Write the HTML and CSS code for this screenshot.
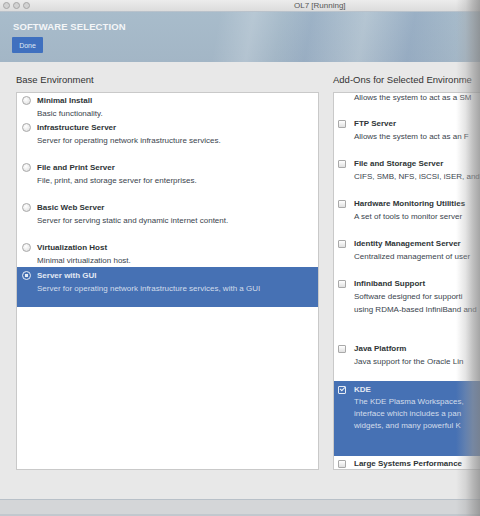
FILE: index.html
```html
<!DOCTYPE html>
<html>
<head>
<meta charset="utf-8">
<link rel="stylesheet" href="styles.css">
</head>
<body>
<div class="window">
  <div class="titlebar">
    <div class="lights"><span class="light"></span><span class="light"></span><span class="light"></span></div>
    <span class="wtitle">OL7 [Running]</span>
  </div>
  <div class="header">
    <h1>SOFTWARE SELECTION</h1>
    <button class="done">Done</button>
  </div>
  <div class="content">
    <section class="col left">
      <h2>Base Environment</h2>
      <div class="list">
        <div class="item short"><span class="radio"></span><div class="txt"><div class="t">Minimal Install</div><div class="d">Basic functionality.</div></div></div>
        <div class="item"><span class="radio"></span><div class="txt"><div class="t">Infrastructure Server</div><div class="d">Server for operating network infrastructure services.</div></div></div>
        <div class="item"><span class="radio"></span><div class="txt"><div class="t">File and Print Server</div><div class="d">File, print, and storage server for enterprises.</div></div></div>
        <div class="item"><span class="radio"></span><div class="txt"><div class="t">Basic Web Server</div><div class="d">Server for serving static and dynamic internet content.</div></div></div>
        <div class="item short"><span class="radio"></span><div class="txt"><div class="t">Virtualization Host</div><div class="d">Minimal virtualization host.</div></div></div>
        <div class="item sel"><span class="radio on"></span><div class="txt"><div class="t">Server with GUI</div><div class="d">Server for operating network infrastructure services, with a GUI</div></div></div>
      </div>
    </section>
    <section class="col right">
      <h2>Add-Ons for Selected Environme</h2>
      <div class="list rlist">
        <div class="partial">Allows the system to act as a SM</div>
        <div class="item"><span class="check"></span><div class="txt"><div class="t">FTP Server</div><div class="d">Allows the system to act as an F</div></div></div>
        <div class="item"><span class="check"></span><div class="txt"><div class="t">File and Storage Server</div><div class="d">CIFS, SMB, NFS, iSCSI, iSER, and</div></div></div>
        <div class="item"><span class="check"></span><div class="txt"><div class="t">Hardware Monitoring Utilities</div><div class="d">A set of tools to monitor server</div></div></div>
        <div class="item"><span class="check"></span><div class="txt"><div class="t">Identity Management Server</div><div class="d">Centralized management of user</div></div></div>
        <div class="item infini"><span class="check"></span><div class="txt"><div class="t">Infiniband Support</div><div class="d">Software designed for supporti<br>using RDMA-based InfiniBand and</div></div></div>
        <div class="item"><span class="check"></span><div class="txt"><div class="t">Java Platform</div><div class="d">Java support for the Oracle Lin</div></div></div>
        <div class="item sel kde"><span class="check on"></span><div class="txt"><div class="t">KDE</div><div class="d">The KDE Plasma Workspaces,<br>interface which includes a pan<br>widgets, and many powerful K</div></div></div>
        <div class="item"><span class="check"></span><div class="txt"><div class="t">Large Systems Performance</div></div></div>
      </div>
    </section>
  </div>
  <div class="footer"></div>
  <div class="edge"></div>
</div>
</body>
</html>
```
FILE: styles.css
```css
* { box-sizing: border-box; }
html, body { margin: 0; padding: 0; }
body {
  width: 480px;
  height: 516px;
  overflow: hidden;
  background: #e8e8e8;
  font-family: "Liberation Sans", Arial, sans-serif;
}
.window {
  position: relative;
  width: 480px;
  height: 516px;
  overflow: hidden;
  display: flex;
  flex-direction: column;
}
.titlebar {
  height: 12px;
  flex: none;
  display: flex;
  align-items: center;
  background: linear-gradient(#ececec, #dcdcdc);
  border-bottom: 1px solid #b9c2cb;
}
.lights { display: flex; gap: 3px; padding-left: 3px; }
.light {
  width: 7px; height: 7px;
  border-radius: 50%;
  background: #d2d2d2;
  border: 1px solid #a6a6a6;
}
.wtitle {
  margin-left: 264px;
  font-size: 8px;
  color: #555;
}
.header {
  height: 50px;
  flex: none;
  padding: 9px 0 0 12px;
  background:
    linear-gradient(100deg, rgba(255,255,255,0) 45%, rgba(255,255,255,0.18) 52%, rgba(255,255,255,0) 58%, rgba(90,120,170,0.14) 64%, rgba(255,255,255,0.15) 75%, rgba(90,120,170,0.18) 85%, rgba(255,255,255,0) 95%),
    linear-gradient(#a8bccb, #a3b6c6);
}
.header h1 {
  margin: 0 0 0 1px;
  font-size: 9.5px;
  line-height: 12px;
  font-weight: bold;
  color: #f4f6f8;
  letter-spacing: 0.1px;
}
.done {
  display: block;
  margin-top: 4px;
  width: 31px;
  height: 16px;
  padding: 0;
  border: none;
  border-radius: 1px;
  background: #3f70bf;
  color: #dfe7f4;
  font-family: "Liberation Sans", Arial, sans-serif;
  font-size: 7px;
}
.content {
  flex: 1;
  display: flex;
  gap: 14px;
  padding-left: 16px;
  background: #e8e8e8;
}
.col { flex: none; display: flex; flex-direction: column; }
.left { width: 303px; }
.right { width: 147px; }
.col h2 {
  margin: 12px 0 6px 0;
  font-size: 9.5px;
  line-height: 12px;
  font-weight: normal;
  color: #333;
  white-space: nowrap;
}
.list {
  height: 378px;
  background: #fff;
  border: 1px solid #c9c9c9;
  overflow: hidden;
}
.item {
  display: flex;
  align-items: flex-start;
  padding: 1px 0 13px 5px;
  gap: 6px;
}
.item.short { padding-bottom: 0; }
.item.sel {
  background: #4671b4;
  padding-top: 2px;
  padding-bottom: 12px;
}
.txt { min-width: 0; white-space: nowrap; }
.t {
  font-size: 8px;
  line-height: 13px;
  font-weight: bold;
  color: #2e3436;
}
.d {
  font-size: 8px;
  line-height: 13px;
  color: #3a444d;
}
.sel .t { color: #e3e9f3; }
.sel .d { color: #d3ddeb; }
.radio {
  flex: none;
  margin-top: 2px;
  width: 9px;
  height: 9px;
  border-radius: 50%;
  border: 1px solid #a9a9a9;
  background: radial-gradient(circle at 40% 35%, #fff, #dcdcdc);
}
.radio.on {
  border-color: #e6ecf5;
  background: radial-gradient(circle, #e6ecf5 0 1.5px, #4671b4 2px);
}
.rlist { border-right: none; }
.rlist .item { padding-left: 4px; gap: 8px; }
.rlist .item.infini { padding-bottom: 25px; }
.check {
  flex: none;
  margin-top: 3px;
  width: 8px;
  height: 8px;
  border: 1px solid #a9a9a9;
  border-radius: 1px;
  background: linear-gradient(#fff, #e0e0e0);
}
.check.on {
  border-color: #e6ecf5;
  background: #4671b4;
  position: relative;
}
.check.on::after {
  content: "";
  position: absolute;
  left: 1px; top: 0px;
  width: 4px; height: 2px;
  border-left: 1.5px solid #eef2f8;
  border-bottom: 1.5px solid #eef2f8;
  transform: rotate(-45deg);
}
.partial {
  font-size: 8px;
  line-height: 10px;
  color: #3a444d;
  padding: 0 0 13px 20px;
  white-space: nowrap;
}
.rlist .item.sel.kde { padding-bottom: 24px; }
.rlist .kde .d { line-height: 12px; }
.footer {
  height: 17px;
  flex: none;
  background: #d4d6d8;
  border-top: 1px solid #b8c0c8;
  border-bottom: 2px solid #c2c8ce;
}
.edge {
  position: absolute;
  top: 0;
  right: 0;
  width: 24px;
  height: 516px;
  background: linear-gradient(90deg, rgba(170,170,170,0) 0%, rgba(165,165,165,0.3) 40%, rgba(150,150,150,0.6) 70%, rgba(135,135,135,0.75) 100%);
  pointer-events: none;
}
```
